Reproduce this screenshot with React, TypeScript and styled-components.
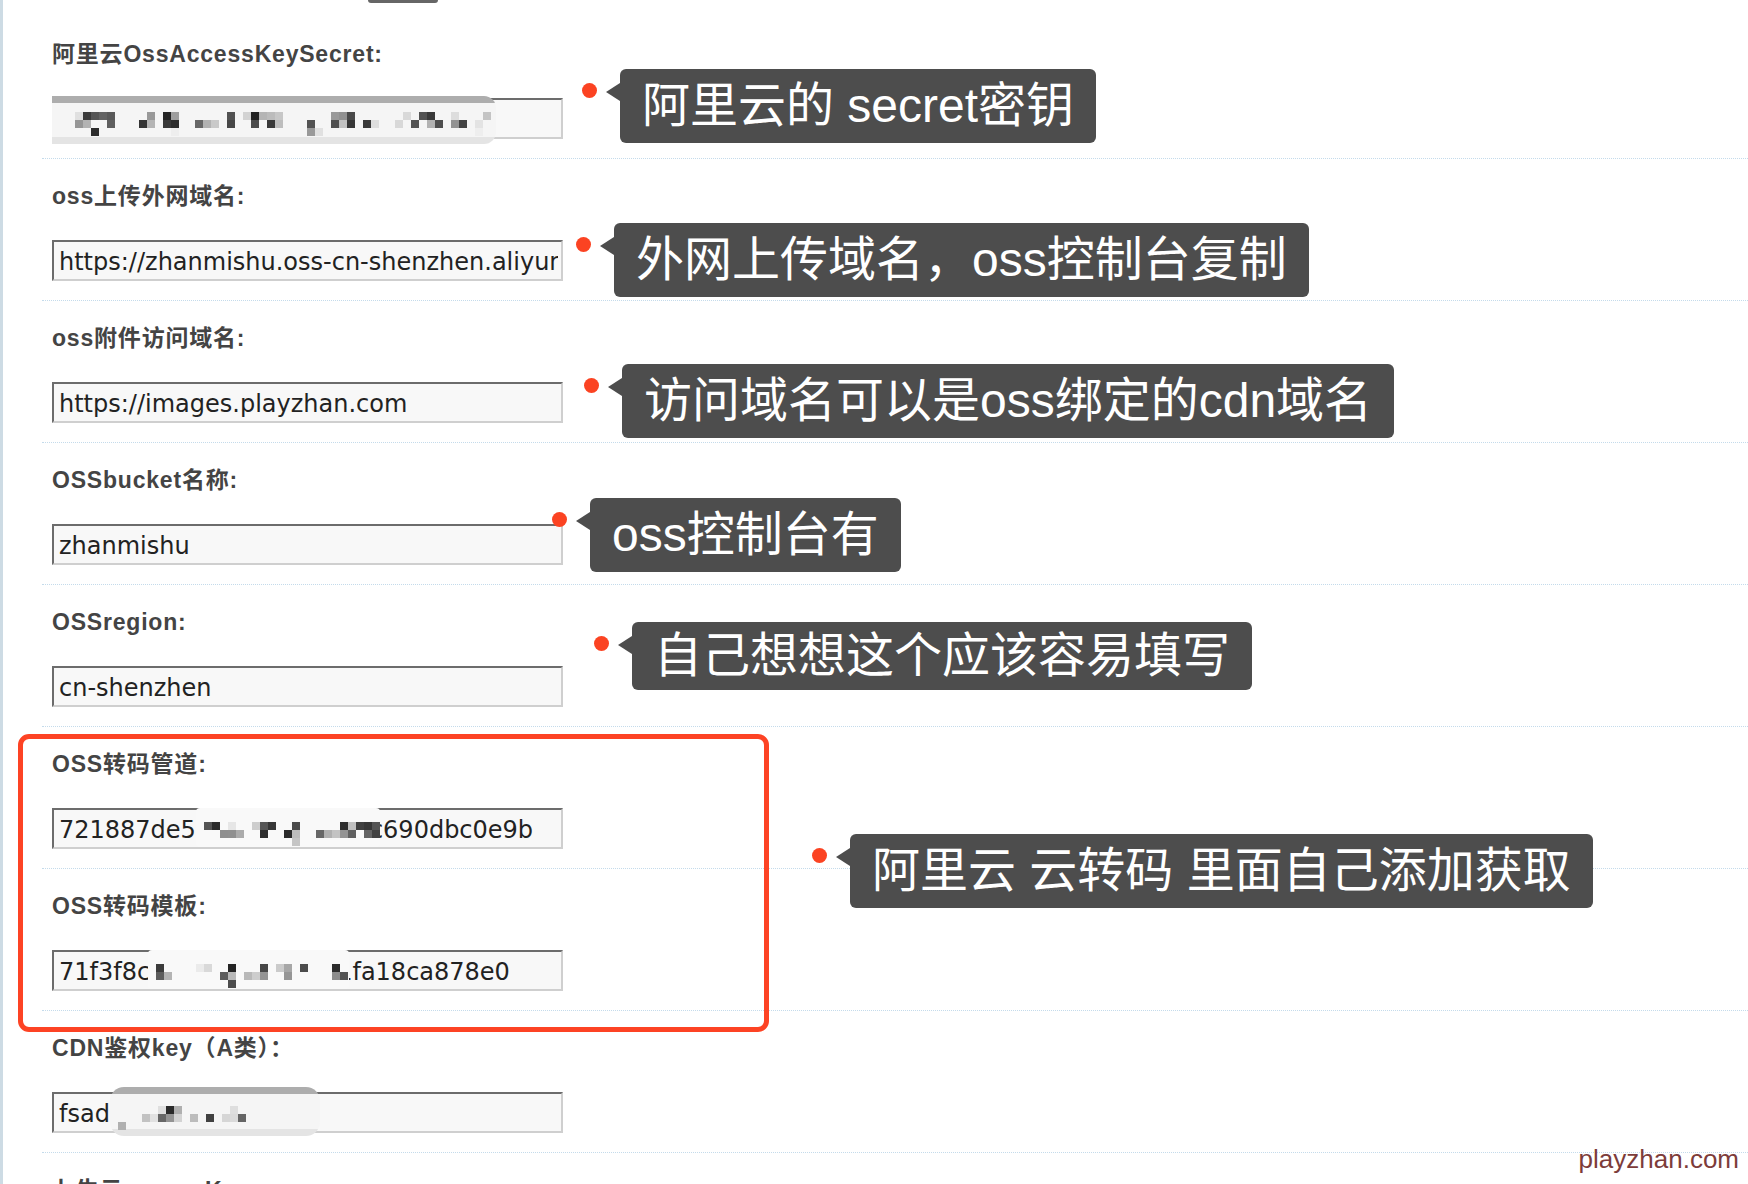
import React, { useMemo } from "react";
import styled, { createGlobalStyle } from "styled-components";

const GlobalStyle = createGlobalStyle`
  html, body {
    margin: 0;
    padding: 0;
    background: #fff;
  }
  body {
    width: 1748px;
    height: 1184px;
    overflow: hidden;
  }
`;

const Page = styled.div`
  position: relative;
  width: 1748px;
  height: 1184px;
  overflow: hidden;
  background: #fff;
`;

const Sheet = styled.div`
  height: 100%;
  box-sizing: border-box;
  border-left: 3px solid #cddbe4;
  padding: 17px 0 0 39px;
`;

const Row = styled.div`
  padding: 24px 0 19px 10px;
  border-bottom: 1px dotted #c4dbeb;
`;

const Label = styled.div`
  height: 26px;
  font-family: "Liberation Sans", "Noto Sans CJK SC", sans-serif;
  font-weight: 700;
  font-size: 23px;
  line-height: 26px;
  letter-spacing: 0.8px;
  color: #444;
  white-space: nowrap;
`;

const Field = styled.div`
  margin-top: 31px;
  width: 511px;
  height: 41px;
  box-sizing: border-box;
  display: flex;
  align-items: center;
  padding: 0 3px 0 5px;
  background: #f8f8f8;
  border-style: solid;
  border-width: 2px;
  border-color: #6c6c6c #cfcfcf #cfcfcf #6c6c6c;
`;

const Value = styled.span`
  flex: 0 1 auto;
  min-width: 0;
  overflow: hidden;
  white-space: nowrap;
  padding-top: 3px;
  font-family: "DejaVu Sans", sans-serif;
  font-size: 24px;
  line-height: 28px;
  color: #222;
`;

const MosaicBox = styled.div<{
  $w: number;
  $mt: number;
  $mb: number;
  $ml: number;
  $mr: number;
  $banded?: boolean;
  $radius: string;
}>`
  position: relative;
  z-index: 1;
  flex: none;
  align-self: stretch;
  width: ${(p) => p.$w}px;
  margin: ${(p) => `${p.$mt}px ${p.$mr}px ${p.$mb}px ${p.$ml}px`};
  border-radius: ${(p) => p.$radius};
  overflow: hidden;
  background: ${(p) =>
    p.$banded
      ? "linear-gradient(#adadad 0 7px, #f5f5f5 7px calc(100% - 7px), #e4e4e4 calc(100% - 7px))"
      : "#f9f9f9"};

  svg {
    display: block;
  }
`;

const Frame = styled.div`
  position: absolute;
  left: 18px;
  top: 734px;
  width: 751px;
  height: 298px;
  box-sizing: border-box;
  border: 5px solid #fd4324;
  border-radius: 11px;
  pointer-events: none;
`;

const TopStub = styled.div`
  position: absolute;
  left: 368px;
  top: 0;
  width: 70px;
  height: 3px;
  background: #666;
  border-radius: 0 0 3px 3px;
`;

const Note = styled.div<{ $x: number; $y: number }>`
  position: absolute;
  left: ${(p) => p.$x - 38}px;
  top: ${(p) => p.$y}px;
  display: flex;
  align-items: flex-start;
`;

const Dot = styled.span`
  flex: none;
  width: 15px;
  height: 15px;
  margin-top: 14px;
  border-radius: 50%;
  background: #fb4322;
`;

const Bubble = styled.div<{ $h: number }>`
  position: relative;
  margin-left: 23px;
  height: ${(p) => p.$h}px;
  padding: 0 22px;
  border-radius: 6px;
  background: #4d4d4d;
  color: #fff;
  font-family: "Liberation Sans", "Noto Sans CJK SC", sans-serif;
  font-size: 48px;
  line-height: ${(p) => p.$h}px;
  white-space: nowrap;

  &::before {
    content: "";
    position: absolute;
    left: -14px;
    top: 14px;
    border-style: solid;
    border-width: 9px 14px 9px 0;
    border-color: transparent #4d4d4d transparent transparent;
  }
`;

const Watermark = styled.div`
  position: absolute;
  right: 9px;
  top: 1146px;
  font-family: "Liberation Sans", sans-serif;
  font-size: 26px;
  line-height: 1;
  color: #7d3c3a;
`;

type MosaicProps = {
  w: number;
  mt: number;
  mb: number;
  ml?: number;
  mr?: number;
  banded?: boolean;
  radius?: string;
  seed: number;
  from?: number;
  to?: number;
};

// pixelated cover over the secret part of a value
const Mosaic: React.FC<MosaicProps> = ({ w, mt, mb, ml = 0, mr = 0, banded, radius = "4px", seed, from = 0, to }) => {
  const h = 37 - mt - mb;
  const cy = 20 - mt;
  const cells = useMemo(() => {
    let s = seed;
    const r = () => {
      s = (s * 1664525 + 1013904223) % 4294967296;
      return s / 4294967296;
    };
    const out: { x: number; y: number; c: string }[] = [];
    const end = to ?? w;
    for (let x = from; x + 8 <= end; x += 8) {
      if (r() < 0.3) continue;
      const rows = [
        { y: cy - 8, p: 0.5 },
        { y: cy, p: 0.65 },
        { y: cy + 8, p: 0.1 },
      ];
      rows.forEach((row) => {
        if (r() > row.p) return;
        const v = Math.floor(r() < 0.45 ? 35 + r() * 70 : 140 + r() * 100);
        out.push({ x, y: row.y, c: `rgb(${v},${v},${v})` });
      });
    }
    return out;
  }, [seed, w, cy, from, to]);

  return (
    <MosaicBox $w={w} $mt={mt} $mb={mb} $ml={ml} $mr={mr} $banded={banded} $radius={radius}>
      <svg width={w} height={h} viewBox={`0 0 ${w} ${h}`}>
        {cells.map((c, i) => (
          <rect key={i} x={c.x} y={c.y} width={8} height={8} fill={c.c} />
        ))}
      </svg>
    </MosaicBox>
  );
};

type Item = { label: string; value: React.ReactNode };

const items: Item[] = [
  {
    label: "阿里云OssAccessKeySecret:",
    value: <Mosaic w={444} mt={-4} mb={-7} ml={-7} banded radius="0 12px 12px 0" seed={11} from={7} to={440} />,
  },
  { label: "oss上传外网域名:", value: <Value>https://zhanmishu.oss-cn-shenzhen.aliyuncs.com</Value> },
  { label: "oss附件访问域名:", value: <Value>https://images.playzhan.com</Value> },
  { label: "OSSbucket名称:", value: <Value>zhanmishu</Value> },
  { label: "OSSregion:", value: <Value>cn-shenzhen</Value> },
  {
    label: "OSS转码管道:",
    value: (
      <>
        <Value>721887de5</Value>
        <Mosaic w={184} mt={-2} mb={0} mr={-10} seed={47} />
        <Value>c690dbc0e9b</Value>
      </>
    ),
  },
  {
    label: "OSS转码模板:",
    value: (
      <>
        <Value>71f3f8c</Value>
        <Mosaic w={201} mt={-2} mb={0} ml={-2} mr={-12} seed={93} />
        <Value>1fa18ca878e0</Value>
      </>
    ),
  },
  {
    label: "CDN鉴权key（A类）：",
    value: (
      <>
        <Value>fsad</Value>
        <Mosaic w={210} mt={-7} mb={-5} banded radius="14px" seed={7} from={0} to={160} />
      </>
    ),
  },
  { label: "七牛云accessKey:", value: <Value>&nbsp;</Value> },
];

type Annotation = { x: number; y: number; h?: number; text: string };

const notes: Annotation[] = [
  { x: 620, y: 69, text: "阿里云的 secret密钥" },
  { x: 614, y: 223, text: "外网上传域名，oss控制台复制" },
  { x: 622, y: 364, text: "访问域名可以是oss绑定的cdn域名" },
  { x: 590, y: 498, text: "oss控制台有" },
  { x: 632, y: 622, h: 68, text: "自己想想这个应该容易填写" },
  { x: 850, y: 834, text: "阿里云 云转码 里面自己添加获取" },
];

export default function App() {
  return (
    <Page>
      <GlobalStyle />
      <Sheet>
        {items.map((item) => (
          <Row key={item.label}>
            <Label>{item.label}</Label>
            <Field>{item.value}</Field>
          </Row>
        ))}
      </Sheet>
      <TopStub />
      <Frame />
      {notes.map((n) => (
        <Note key={n.text} $x={n.x} $y={n.y}>
          <Dot />
          <Bubble $h={n.h ?? 74}>{n.text}</Bubble>
        </Note>
      ))}
      <Watermark>playzhan.com</Watermark>
    </Page>
  );
}
